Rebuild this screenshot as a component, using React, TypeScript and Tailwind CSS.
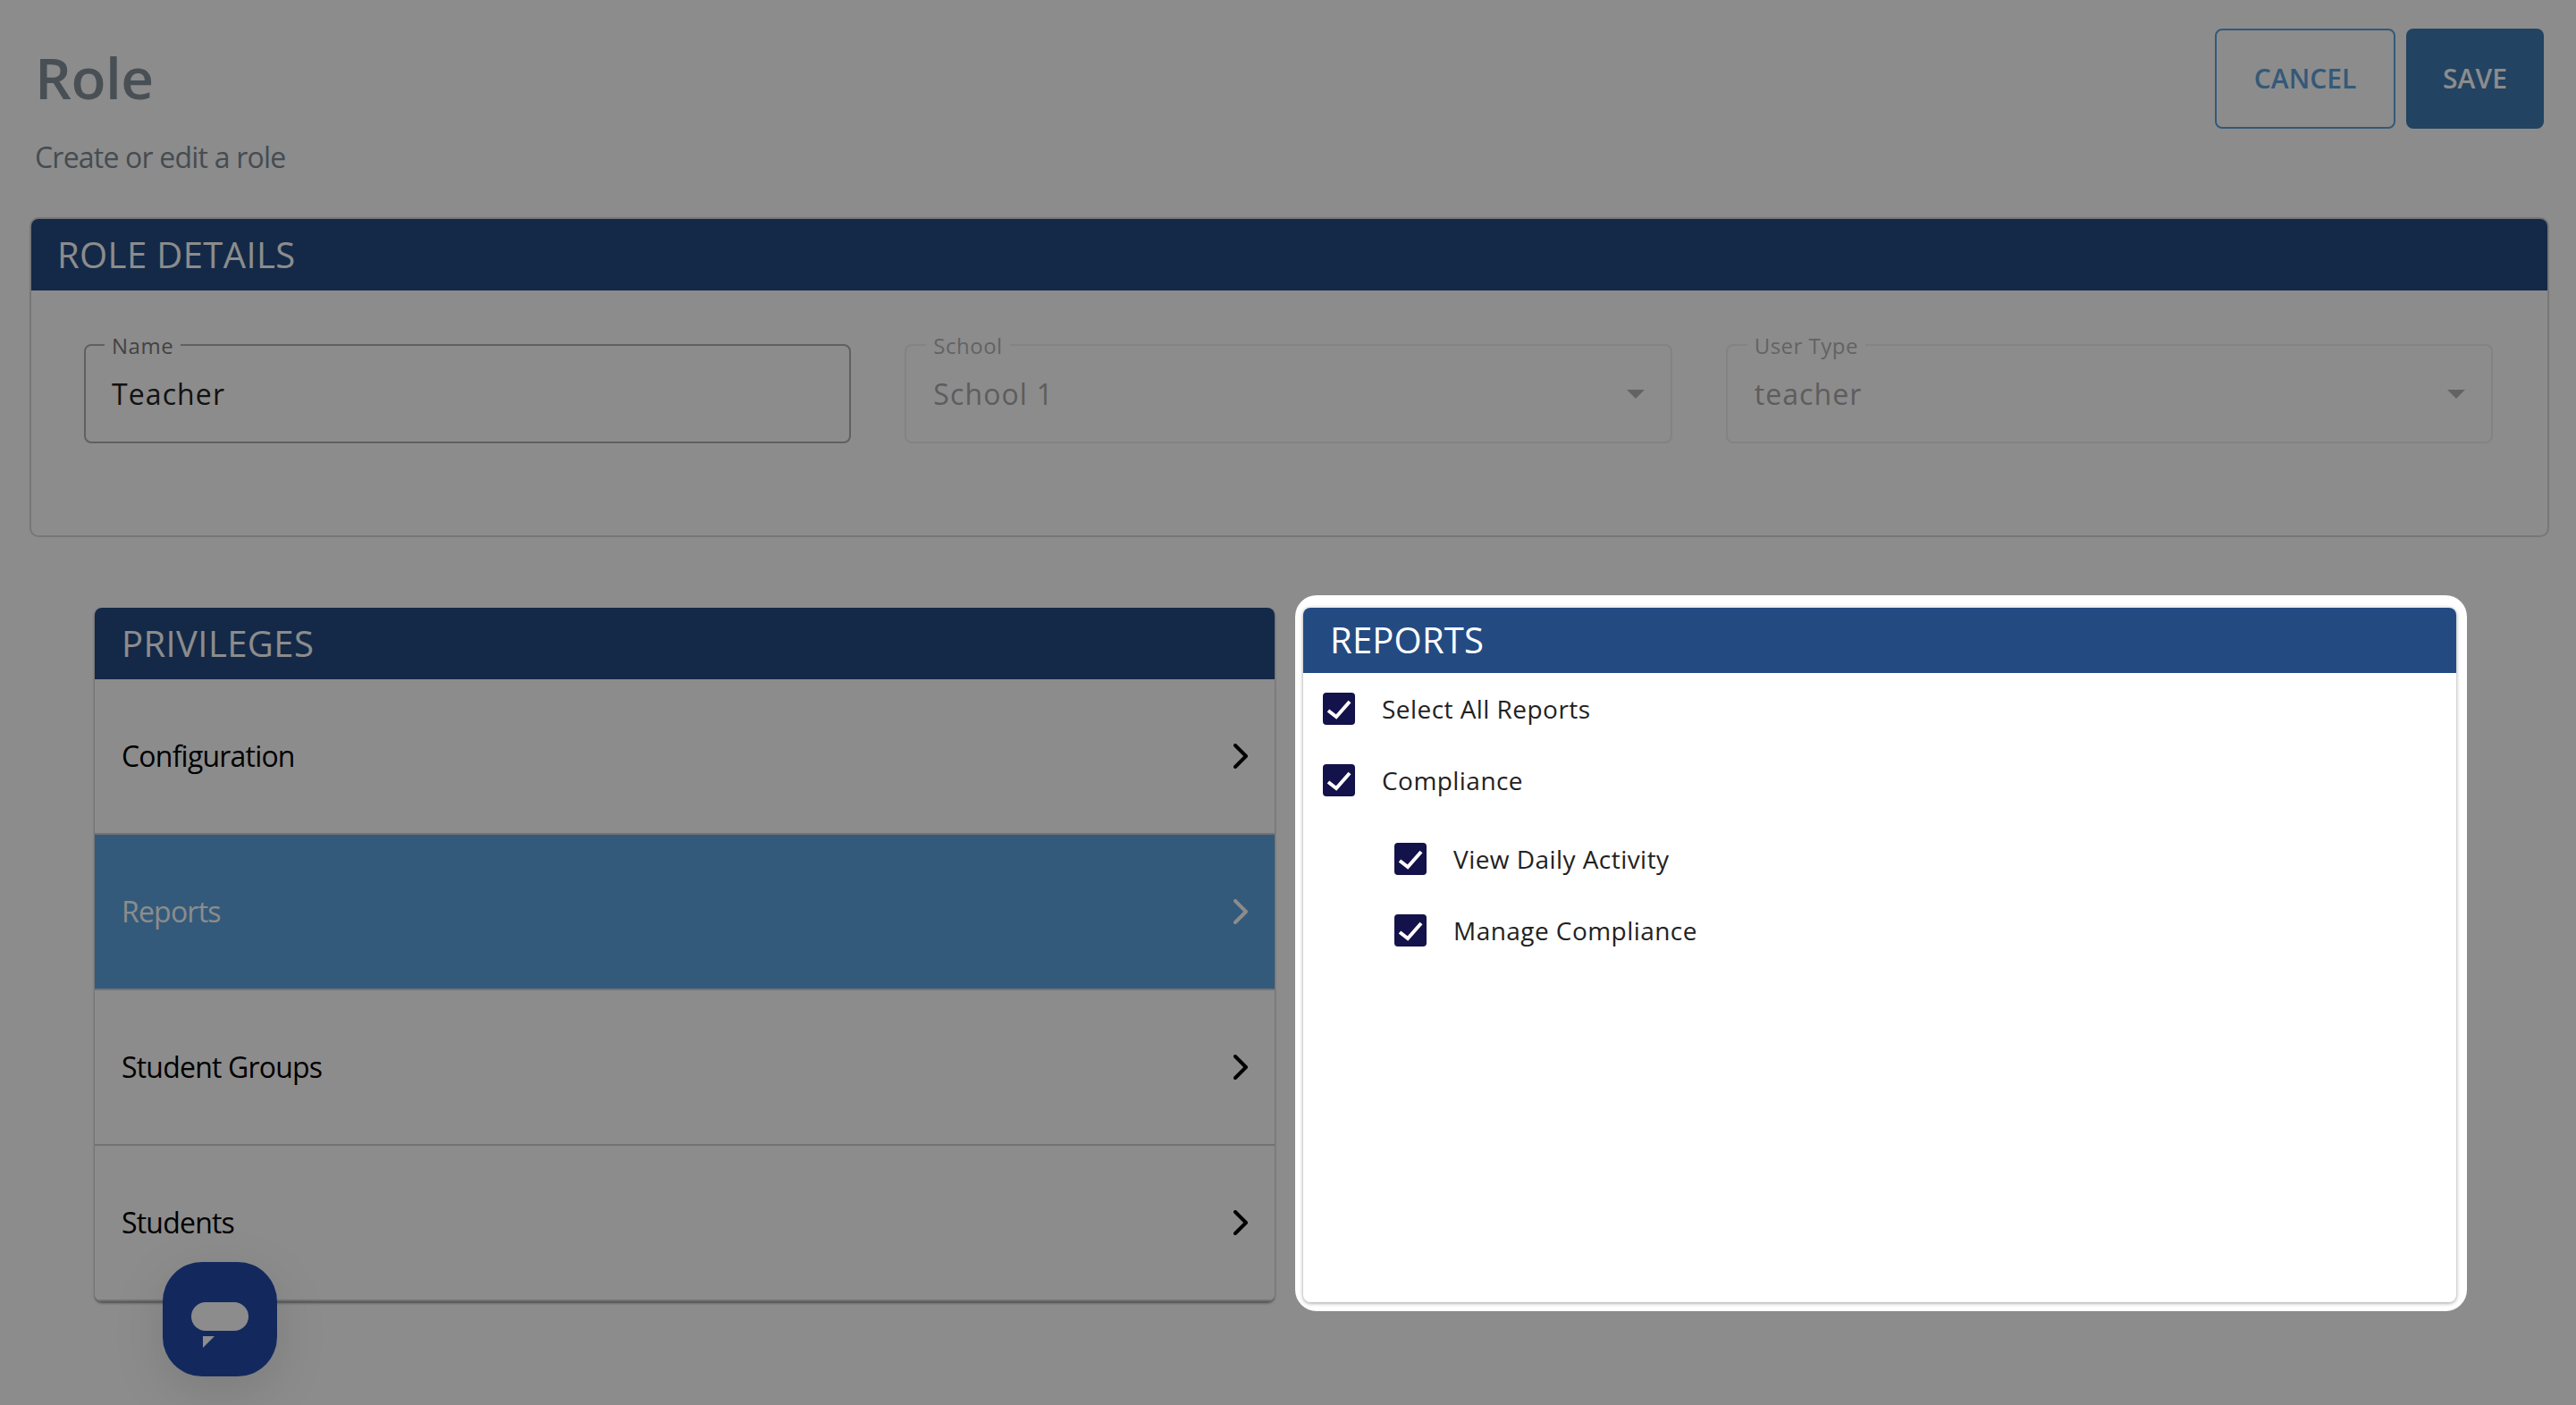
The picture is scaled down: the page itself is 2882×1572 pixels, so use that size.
import React from "react";

const privileges = ["Configuration", "Reports", "Student Groups", "Students"];

const Chevron = () => (
    <svg width="16" height="28" viewBox="0 0 16 28" fill="none" stroke="currentColor" strokeWidth="4" strokeLinecap="round" strokeLinejoin="round">
        <polyline points="2,2 14,14 2,26" />
    </svg>
);

const Check = ({ label, nested }: { label: string; nested?: boolean }) => (
    <div className={nested ? "flex items-center gap-[30px] pl-[80px]" : "flex items-center gap-[30px]"}>
        <div className="w-[36px] h-[36px] rounded-[4px] bg-[#14124a] shrink-0">
            <svg width="36" height="36" viewBox="0 0 36 36" fill="none" stroke="white" strokeWidth="4">
                <polyline points="6,20 15,27 30,10" />
            </svg>
        </div>
        <span className="text-[28px] leading-[36px] tracking-[0.45px] text-[#222]">{label}</span>
    </div>
);

const Field = ({ label, value, disabled }: { label: string; value: string; disabled?: boolean }) => (
    <div
        className={
            disabled
                ? "relative h-[111px] rounded-[8px] border-2 border-[#eeeeee] flex items-center justify-between pl-[30px] pr-[31px]"
                : "relative h-[111px] rounded-[8px] border-2 border-[#b0b0b0] flex items-center justify-between pl-[29px] pr-[31px]"
        }
    >
        <span
            className={
                disabled
                    ? "absolute left-[22px] -top-[14px] bg-white px-[8px] text-[24px] leading-[28px] tracking-[0.5px] text-[#b5b5b5]"
                    : "absolute left-[21px] -top-[14px] bg-white px-[8px] text-[24px] leading-[28px] tracking-[0.5px] text-[#7a7a7a]"
            }
        >
            {label}
        </span>
        <span
            className={
                disabled
                    ? "text-[32px] tracking-[1.1px] text-[#aaaaaa]"
                    : "text-[32px] tracking-[1.1px] text-[#222222]"
            }
        >
            {value}
        </span>
        {disabled && <span className="w-0 h-0 border-x-[10px] border-x-transparent border-t-[10px] border-t-[#b5b5b5] mr-[-2px]" />}
    </div>
);

export default function App() {
    return (
        <div className="relative h-[1572px] overflow-hidden bg-white font-['Open_Sans',sans-serif]">
            <div className="pl-[33px] pr-[30px]">
                <div className="h-[243px] flex justify-between pt-[32px] pr-[6px]">
                    <div className="pl-[6px]">
                        <h1 className="text-[64px] leading-[64px] mt-[23px] font-semibold tracking-[-0.5px] text-[#86929b]">Role</h1>
                        <p className="text-[32px] leading-[44px] mt-[35px] tracking-[-0.8px] text-[#7f8b95]">Create or edit a role</p>
                    </div>
                    <div className="flex gap-[12px] h-[112px]">
                        <button className="w-[202px] rounded-[8px] border-2 border-[#5ea3dc] text-[30px] font-semibold text-[#5ea3dc] pb-[2px]">CANCEL</button>
                        <button className="w-[154px] rounded-[8px] bg-[#3f7ab2] text-[30px] font-semibold text-white pb-[2px]">SAVE</button>
                    </div>
                </div>
                <div className="h-[358px] rounded-[10px] border-2 border-[#d9d9d9] overflow-hidden">
                    <div className="h-[80px] bg-[#234b82] flex items-center pl-[29px] text-[40px] tracking-[0.4px] text-white">ROLE DETAILS</div>
                    <div className="grid grid-cols-3 gap-[60px] pl-[59px] pr-[61px] pt-[60px]">
                        <Field label="Name" value="Teacher" />
                        <Field label="School" value="School 1" disabled />
                        <Field label="User Type" value="teacher" disabled />
                    </div>
                </div>
            </div>

            <div className="flex pl-[106px] pt-[65px] gap-[23px]">
                <div className="w-[1320px] h-[776px] mt-[14px] rounded-[8px] overflow-hidden shadow-[0_2px_3px_rgba(0,0,0,0.45)] flex flex-col">
                    <div className="h-[80px] shrink-0 bg-[#234b82] flex items-center pl-[30px] text-[40px] tracking-[0.4px] text-white">PRIVILEGES</div>
                    {privileges.map((name) => (
                        <div
                            key={name}
                            className={
                                name === "Reports"
                                    ? "flex-1 flex items-center justify-between pl-[30px] pr-[30px] bg-[#5da4e1] text-white border-b-2 border-[#d0d0d0] text-[32px] tracking-[-0.8px]"
                                    : "flex-1 flex items-center justify-between pl-[30px] pr-[30px] bg-white text-black border-b-2 border-[#d0d0d0] text-[32px] tracking-[-0.8px]"
                            }
                        >
                            <span>{name}</span>
                            <Chevron />
                        </div>
                    ))}
                </div>

                <div className="relative z-20 w-[1311px] h-[801px] bg-white rounded-[24px] pl-[9px] pr-[12px] pt-[14px] pb-[10px]">
                    <div className="h-full rounded-[8px] overflow-hidden shadow-[0_1px_4px_rgba(0,0,0,0.4)]">
                        <div className="h-[73px] bg-[#234b82] flex items-center pl-[30px] pb-[2px] text-[40px] tracking-[0.2px] text-white">REPORTS</div>
                        <div className="pl-[22px] pt-[22px]">
                            <Check label="Select All Reports" />
                            <div className="mt-[44px]">
                                <Check label="Compliance" />
                            </div>
                            <div className="mt-[52px]">
                                <Check label="View Daily Activity" nested />
                            </div>
                            <div className="mt-[44px]">
                                <Check label="Manage Compliance" nested />
                            </div>
                        </div>
                    </div>
                </div>
            </div>

            <div className="absolute left-[182px] top-[1412px] w-[128px] h-[128px] rounded-[44px] bg-[#234cab] shadow-[0_16px_60px_rgba(0,0,0,0.12)]">
                <svg width="128" height="128" viewBox="0 0 128 128" fill="white">
                    <rect x="32" y="45" width="64" height="32" rx="16" />
                    <polygon points="45,83 58,83 45,96" />
                </svg>
            </div>

            {/* tour backdrop, the reports card sits above it */}
            <div className="absolute inset-0 z-10 bg-black/45" />
        </div>
    );
}
